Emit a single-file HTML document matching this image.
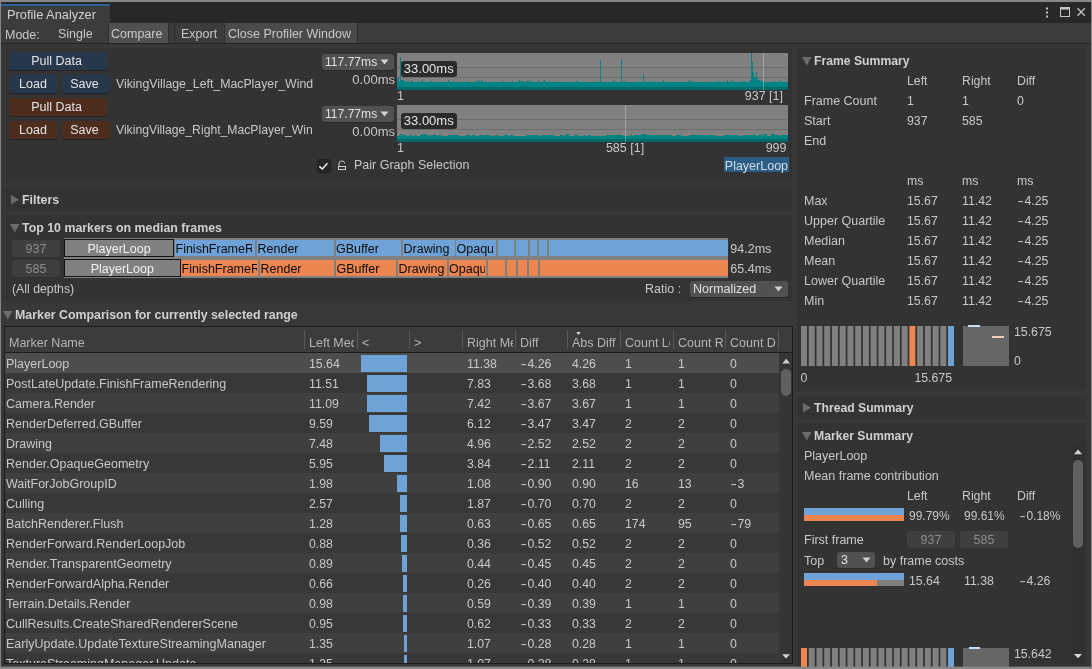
<!DOCTYPE html>
<html><head><meta charset="utf-8"><title>Profile Analyzer</title>
<style>
*{box-sizing:border-box;margin:0;padding:0}
html,body{width:1092px;height:669px;overflow:hidden;background:#383838}
body{font-family:"Liberation Sans",sans-serif;font-size:12.5px;color:#c8c8c8;position:relative;-webkit-font-smoothing:antialiased}
#root{position:absolute;left:0;top:0;width:1092px;height:669px}
.t,.g{will-change:opacity}
span.g{display:inline-block}
.a{position:absolute;white-space:nowrap}
.t{position:absolute;white-space:nowrap;height:20px;line-height:20px}
.b{font-weight:bold;font-size:12.2px}
.panel{position:absolute;background:#333333}
.btn{position:absolute;height:18px;line-height:19px;text-align:center;padding-right:3px;border-radius:3px;color:#e4e4e4;box-shadow:0 1px 0 #242424}
.blue{background:#27384c}
.brown{background:#4f2d1e}
.dd{position:absolute;background:#515151;border-radius:3px;box-shadow:0 1px 0 #2a2a2a;line-height:16px;color:#e0e0e0}
.row{position:absolute;left:5px;width:774px;height:20px}
.hsep{position:absolute;top:330px;width:1px;height:19px;background:#595959}
.num{font-size:12.3px}
.m{display:inline-block;width:7.4px;text-align:center;transform:scaleX(1.55)}
</style></head>
<body>
<div class="a" style="left:0;top:0;width:1092px;height:2px;background:#878787"></div>
<div class="a" style="left:0;top:2px;width:1092px;height:21px;background:#282828"></div>
<div class="a" style="left:1px;top:4px;width:109px;height:19px;background:#3c3c3c;border-top:2px solid #2d6399"></div>
<div class="t" style="left:7px;top:5px;color:#d2d2d2;font-size:12.8px">Profile Analyzer</div>
<svg class="a" style="left:1040px;top:4px" width="50" height="16" viewBox="0 0 50 16">
<rect x="6" y="3.5" width="2" height="2" fill="#c4c4c4"/><rect x="6" y="7.5" width="2" height="2" fill="#c4c4c4"/><rect x="6" y="11.5" width="2" height="2" fill="#c4c4c4"/>
<rect x="20.5" y="4.5" width="9" height="8" fill="none" stroke="#c4c4c4" stroke-width="1"/><rect x="20" y="3" width="10" height="2.5" fill="#c4c4c4"/>
<path d="M37.5 4.2 L44.8 11.8 M44.8 4.2 L37.5 11.8" stroke="#c4c4c4" stroke-width="1.3" fill="none"/>
</svg>
<div class="a" style="left:0;top:23px;width:1092px;height:20px;background:#3c3c3c"></div>
<div class="a" style="left:0;top:43px;width:1092px;height:1px;background:#232323"></div>
<div class="a" style="left:108px;top:23px;width:61px;height:20px;background:#505050;border-left:1px solid #2e2e2e;border-right:1px solid #2e2e2e"></div>
<div class="a" style="left:174px;top:23px;width:1px;height:20px;background:#2e2e2e"></div>
<div class="a" style="left:224px;top:23px;width:134px;height:20px;background:#4a4a4a;border-left:1px solid #2e2e2e;border-right:1px solid #2e2e2e"></div>
<div class="t" style="left:5px;top:25px">Mode:</div>
<div class="t" style="left:58px;top:24px">Single</div>
<div class="t" style="left:111px;top:24px">Compare</div>
<div class="t" style="left:181px;top:24px">Export</div>
<div class="t" style="left:228px;top:24px">Close Profiler Window</div>
<div class="panel" style="left:5px;top:48px;width:786.7px;height:135px"></div>
<div class="btn blue" style="left:9px;top:52px;width:98px"><span class="g">Pull Data</span></div>
<div class="btn blue" style="left:9px;top:75px;width:48px;padding-right:0"><span class="g">Load</span></div>
<div class="btn blue" style="left:62px;top:75px;width:48px"><span class="g">Save</span></div>
<div class="t" style="left:116px;top:74px;font-size:12.3px">VikingVillage_Left_MacPlayer_Wind</div>
<div class="btn brown" style="left:9px;top:98px;width:98px"><span class="g">Pull Data</span></div>
<div class="btn brown" style="left:9px;top:121px;width:48px;padding-right:0"><span class="g">Load</span></div>
<div class="btn brown" style="left:62px;top:121px;width:48px"><span class="g">Save</span></div>
<div class="t" style="left:116px;top:120px;font-size:12.2px">VikingVillage_Right_MacPlayer_Win</div>
<div class="dd" style="left:322px;top:54px;width:72px;height:16px;padding-left:3px;font-size:12.1px"><span class="g">117.77ms</span><svg class="a" style="left:58px;top:5px" width="9" height="6"><path d="M0.5 0.5 L8.5 0.5 L4.5 5.5 Z" fill="#d0d0d0"/></svg></div>
<div class="t" style="left:325px;top:70px;width:70px;text-align:right;font-size:13px">0.00ms</div>
<svg class="a" style="left:397px;top:53px" width="391" height="37" viewBox="0 0 391 37" shape-rendering="crispEdges"><rect width="391" height="37" fill="#808080"/><rect x="0" y="14" width="390" height="1" fill="#6b6b6b"/><rect x="0" y="24" width="390" height="1" fill="#6b6b6b"/><path d="M0 37 L0 24.5 L1 24.5 L1 24.5 L2 24.5 L2 29.0 L3 29.0 L3 28.0 L4 28.0 L4 27.0 L5 27.0 L5 27.0 L6 27.0 L6 27.0 L7 27.0 L7 29.0 L8 29.0 L8 28.0 L9 28.0 L9 29.0 L10 29.0 L10 28.0 L11 28.0 L11 28.0 L12 28.0 L12 29.0 L13 29.0 L13 29.0 L14 29.0 L14 27.0 L15 27.0 L15 28.5 L16 28.5 L16 29.0 L17 29.0 L17 29.0 L18 29.0 L18 29.0 L19 29.0 L19 29.0 L20 29.0 L20 29.0 L21 29.0 L21 28.0 L22 28.0 L22 29.0 L23 29.0 L23 28.5 L24 28.5 L24 28.5 L25 28.5 L25 27.0 L26 27.0 L26 29.0 L27 29.0 L27 29.0 L28 29.0 L28 28.5 L29 28.5 L29 29.0 L30 29.0 L30 29.0 L31 29.0 L31 29.0 L32 29.0 L32 29.0 L33 29.0 L33 28.0 L34 28.0 L34 28.0 L35 28.0 L35 28.5 L36 28.5 L36 29.0 L37 29.0 L37 29.0 L38 29.0 L38 29.0 L39 29.0 L39 29.0 L40 29.0 L40 29.0 L41 29.0 L41 28.5 L42 28.5 L42 29.0 L43 29.0 L43 29.0 L44 29.0 L44 28.5 L45 28.5 L45 29.0 L46 29.0 L46 29.0 L47 29.0 L47 29.0 L48 29.0 L48 29.0 L49 29.0 L49 28.5 L50 28.5 L50 29.0 L51 29.0 L51 27.0 L52 27.0 L52 29.0 L53 29.0 L53 29.0 L54 29.0 L54 28.5 L55 28.5 L55 29.0 L56 29.0 L56 28.0 L57 28.0 L57 29.0 L58 29.0 L58 29.0 L59 29.0 L59 29.0 L60 29.0 L60 29.0 L61 29.0 L61 29.0 L62 29.0 L62 29.0 L63 29.0 L63 29.0 L64 29.0 L64 29.0 L65 29.0 L65 29.0 L66 29.0 L66 29.0 L67 29.0 L67 29.0 L68 29.0 L68 29.0 L69 29.0 L69 29.0 L70 29.0 L70 28.0 L71 28.0 L71 29.0 L72 29.0 L72 29.0 L73 29.0 L73 29.0 L74 29.0 L74 29.0 L75 29.0 L75 28.5 L76 28.5 L76 29.0 L77 29.0 L77 29.0 L78 29.0 L78 28.0 L79 28.0 L79 29.0 L80 29.0 L80 28.5 L81 28.5 L81 27.0 L82 27.0 L82 28.0 L83 28.0 L83 29.0 L84 29.0 L84 27.0 L85 27.0 L85 28.5 L86 28.5 L86 29.0 L87 29.0 L87 29.0 L88 29.0 L88 28.0 L89 28.0 L89 29.0 L90 29.0 L90 29.0 L91 29.0 L91 29.0 L92 29.0 L92 29.0 L93 29.0 L93 29.0 L94 29.0 L94 28.5 L95 28.5 L95 29.0 L96 29.0 L96 29.0 L97 29.0 L97 29.0 L98 29.0 L98 29.0 L99 29.0 L99 28.5 L100 28.5 L100 28.5 L101 28.5 L101 28.5 L102 28.5 L102 28.5 L103 28.5 L103 29.0 L104 29.0 L104 29.0 L105 29.0 L105 28.5 L106 28.5 L106 28.0 L107 28.0 L107 29.0 L108 29.0 L108 29.0 L109 29.0 L109 29.0 L110 29.0 L110 29.0 L111 29.0 L111 29.0 L112 29.0 L112 29.0 L113 29.0 L113 29.0 L114 29.0 L114 29.0 L115 29.0 L115 28.0 L116 28.0 L116 29.0 L117 29.0 L117 29.0 L118 29.0 L118 29.0 L119 29.0 L119 29.0 L120 29.0 L120 29.0 L121 29.0 L121 29.0 L122 29.0 L122 27.0 L123 27.0 L123 29.0 L124 29.0 L124 28.0 L125 28.0 L125 28.0 L126 28.0 L126 28.5 L127 28.5 L127 28.5 L128 28.5 L128 29.0 L129 29.0 L129 28.0 L130 28.0 L130 28.0 L131 28.0 L131 28.5 L132 28.5 L132 27.0 L133 27.0 L133 29.0 L134 29.0 L134 28.0 L135 28.0 L135 29.0 L136 29.0 L136 29.0 L137 29.0 L137 28.5 L138 28.5 L138 28.5 L139 28.5 L139 29.0 L140 29.0 L140 29.0 L141 29.0 L141 27.0 L142 27.0 L142 29.0 L143 29.0 L143 29.0 L144 29.0 L144 29.0 L145 29.0 L145 29.0 L146 29.0 L146 28.0 L147 28.0 L147 27.0 L148 27.0 L148 29.0 L149 29.0 L149 28.5 L150 28.5 L150 29.0 L151 29.0 L151 28.5 L152 28.5 L152 28.0 L153 28.0 L153 29.0 L154 29.0 L154 29.0 L155 29.0 L155 28.5 L156 28.5 L156 29.0 L157 29.0 L157 28.0 L158 28.0 L158 29.0 L159 29.0 L159 29.0 L160 29.0 L160 29.0 L161 29.0 L161 29.0 L162 29.0 L162 28.5 L163 28.5 L163 29.0 L164 29.0 L164 28.5 L165 28.5 L165 29.0 L166 29.0 L166 29.0 L167 29.0 L167 29.0 L168 29.0 L168 29.0 L169 29.0 L169 28.5 L170 28.5 L170 29.0 L171 29.0 L171 29.0 L172 29.0 L172 29.0 L173 29.0 L173 29.0 L174 29.0 L174 29.0 L175 29.0 L175 29.0 L176 29.0 L176 28.5 L177 28.5 L177 29.0 L178 29.0 L178 29.0 L179 29.0 L179 28.0 L180 28.0 L180 28.0 L181 28.0 L181 28.5 L182 28.5 L182 28.5 L183 28.5 L183 29.0 L184 29.0 L184 29.0 L185 29.0 L185 29.0 L186 29.0 L186 29.0 L187 29.0 L187 29.0 L188 29.0 L188 29.0 L189 29.0 L189 29.0 L190 29.0 L190 28.5 L191 28.5 L191 28.5 L192 28.5 L192 28.5 L193 28.5 L193 28.5 L194 28.5 L194 29.0 L195 29.0 L195 29.0 L196 29.0 L196 29.0 L197 29.0 L197 29.0 L198 29.0 L198 29.0 L199 29.0 L199 29.0 L200 29.0 L200 28.0 L201 28.0 L201 29.0 L202 29.0 L202 29.0 L203 29.0 L203 29.0 L204 29.0 L204 29.0 L205 29.0 L205 29.0 L206 29.0 L206 28.5 L207 28.5 L207 29.0 L208 29.0 L208 29.0 L209 29.0 L209 29.0 L210 29.0 L210 29.0 L211 29.0 L211 29.0 L212 29.0 L212 29.0 L213 29.0 L213 29.0 L214 29.0 L214 29.0 L215 29.0 L215 28.5 L216 28.5 L216 27.0 L217 27.0 L217 28.5 L218 28.5 L218 29.0 L219 29.0 L219 29.0 L220 29.0 L220 28.5 L221 28.5 L221 29.0 L222 29.0 L222 29.0 L223 29.0 L223 29.0 L224 29.0 L224 29.0 L225 29.0 L225 29.0 L226 29.0 L226 28.5 L227 28.5 L227 28.0 L228 28.0 L228 29.0 L229 29.0 L229 29.0 L230 29.0 L230 29.0 L231 29.0 L231 29.0 L232 29.0 L232 29.0 L233 29.0 L233 29.0 L234 29.0 L234 29.0 L235 29.0 L235 28.5 L236 28.5 L236 28.5 L237 28.5 L237 28.5 L238 28.5 L238 28.5 L239 28.5 L239 29.0 L240 29.0 L240 28.5 L241 28.5 L241 29.0 L242 29.0 L242 28.5 L243 28.5 L243 29.0 L244 29.0 L244 29.0 L245 29.0 L245 29.0 L246 29.0 L246 29.0 L247 29.0 L247 29.0 L248 29.0 L248 29.0 L249 29.0 L249 29.0 L250 29.0 L250 29.0 L251 29.0 L251 29.0 L252 29.0 L252 29.0 L253 29.0 L253 28.0 L254 28.0 L254 29.0 L255 29.0 L255 28.5 L256 28.5 L256 28.0 L257 28.0 L257 29.0 L258 29.0 L258 28.5 L259 28.5 L259 29.0 L260 29.0 L260 29.0 L261 29.0 L261 29.0 L262 29.0 L262 29.0 L263 29.0 L263 29.0 L264 29.0 L264 29.0 L265 29.0 L265 29.0 L266 29.0 L266 27.0 L267 27.0 L267 29.0 L268 29.0 L268 28.5 L269 28.5 L269 28.5 L270 28.5 L270 29.0 L271 29.0 L271 29.0 L272 29.0 L272 29.0 L273 29.0 L273 29.0 L274 29.0 L274 29.0 L275 29.0 L275 29.0 L276 29.0 L276 29.0 L277 29.0 L277 29.0 L278 29.0 L278 29.0 L279 29.0 L279 29.0 L280 29.0 L280 29.0 L281 29.0 L281 29.0 L282 29.0 L282 29.0 L283 29.0 L283 29.0 L284 29.0 L284 29.0 L285 29.0 L285 29.0 L286 29.0 L286 29.0 L287 29.0 L287 28.5 L288 28.5 L288 29.0 L289 29.0 L289 29.0 L290 29.0 L290 29.0 L291 29.0 L291 28.5 L292 28.5 L292 27.0 L293 27.0 L293 29.0 L294 29.0 L294 28.0 L295 28.0 L295 28.5 L296 28.5 L296 28.0 L297 28.0 L297 29.0 L298 29.0 L298 29.0 L299 29.0 L299 29.0 L300 29.0 L300 28.5 L301 28.5 L301 29.0 L302 29.0 L302 29.0 L303 29.0 L303 28.5 L304 28.5 L304 29.0 L305 29.0 L305 29.0 L306 29.0 L306 28.5 L307 28.5 L307 29.0 L308 29.0 L308 29.0 L309 29.0 L309 29.0 L310 29.0 L310 29.0 L311 29.0 L311 29.0 L312 29.0 L312 28.5 L313 28.5 L313 29.0 L314 29.0 L314 29.0 L315 29.0 L315 29.0 L316 29.0 L316 28.5 L317 28.5 L317 29.0 L318 29.0 L318 29.0 L319 29.0 L319 28.0 L320 28.0 L320 29.0 L321 29.0 L321 29.0 L322 29.0 L322 28.0 L323 28.0 L323 29.0 L324 29.0 L324 29.0 L325 29.0 L325 29.0 L326 29.0 L326 28.0 L327 28.0 L327 29.0 L328 29.0 L328 29.0 L329 29.0 L329 29.0 L330 29.0 L330 27.0 L331 27.0 L331 28.5 L332 28.5 L332 28.0 L333 28.0 L333 29.0 L334 29.0 L334 28.5 L335 28.5 L335 27.0 L336 27.0 L336 29.0 L337 29.0 L337 29.0 L338 29.0 L338 29.0 L339 29.0 L339 28.5 L340 28.5 L340 28.5 L341 28.5 L341 29.0 L342 29.0 L342 29.0 L343 29.0 L343 29.0 L344 29.0 L344 28.0 L345 28.0 L345 28.0 L346 28.0 L346 29.0 L347 29.0 L347 29.0 L348 29.0 L348 28.0 L349 28.0 L349 29.0 L350 29.0 L350 29.0 L351 29.0 L351 29.0 L352 29.0 L352 28.0 L353 28.0 L353 29.0 L354 29.0 L354 28.0 L355 28.0 L355 29.0 L356 29.0 L356 29.0 L357 29.0 L357 29.0 L358 29.0 L358 29.0 L359 29.0 L359 29.0 L360 29.0 L360 28.5 L361 28.5 L361 27.0 L362 27.0 L362 29.0 L363 29.0 L363 28.5 L364 28.5 L364 27.0 L365 27.0 L365 28.5 L366 28.5 L366 28.0 L367 28.0 L367 28.5 L368 28.5 L368 29.0 L369 29.0 L369 29.0 L370 29.0 L370 29.0 L371 29.0 L371 28.5 L372 28.5 L372 29.0 L373 29.0 L373 28.5 L374 28.5 L374 29.0 L375 29.0 L375 28.0 L376 28.0 L376 28.5 L377 28.5 L377 28.0 L378 28.0 L378 29.0 L379 29.0 L379 29.0 L380 29.0 L380 28.5 L381 28.5 L381 29.0 L382 29.0 L382 29.0 L383 29.0 L383 27.0 L384 27.0 L384 29.0 L385 29.0 L385 29.0 L386 29.0 L386 29.0 L387 29.0 L387 29.0 L388 29.0 L388 29.0 L389 29.0 L389 29.0 L390 29.0 L390 29.0 L391 29.0 L391 37 Z" fill="#008383"/><rect x="3.0" y="4" width="1" height="26" fill="#008383"/><rect x="203.0" y="7" width="1" height="23" fill="#008383"/><rect x="224.0" y="6" width="1" height="24" fill="#008383"/><rect x="246.0" y="21" width="1" height="9" fill="#008383"/><path d="M353 30 L353 27 L353.9 27 L353.9 0 L355.2 0 L355.2 9 L356.3 9 L356.3 19 L357.4 19 L357.4 25 L358.6 25 L358.6 19 L359.8 19 L359.8 24 L361 24 L361 26.5 L362.5 26.5 L362.5 28 L364 28 L364 30 Z" fill="#008383"/><rect x="0" y="34" width="391" height="3" fill="#006a6b"/><rect x="366" y="0" width="1" height="37" fill="#e0e0e0" opacity="0.38"/></svg>
<div class="a g" style="left:400.5px;top:61px;width:56.5px;height:15.5px;line-height:16px;background:#2b2b2b;border-radius:3px;text-align:center;color:#e6e6e6;font-size:13px"><span class="g">33.00ms</span></div>
<div class="t" style="left:397px;top:86px">1</div>
<div class="t" style="left:700px;top:86px;width:83px;text-align:right">937 [1]</div>
<div class="dd" style="left:322px;top:106px;width:72px;height:16px;padding-left:3px;font-size:12.1px"><span class="g">117.77ms</span><svg class="a" style="left:58px;top:5px" width="9" height="6"><path d="M0.5 0.5 L8.5 0.5 L4.5 5.5 Z" fill="#d0d0d0"/></svg></div>
<div class="t" style="left:325px;top:122px;width:70px;text-align:right;font-size:13px">0.00ms</div>
<svg class="a" style="left:397px;top:105px" width="391" height="37" viewBox="0 0 391 37" shape-rendering="crispEdges"><rect width="391" height="37" fill="#808080"/><rect x="0" y="14" width="390" height="1" fill="#6b6b6b"/><rect x="0" y="24" width="390" height="1" fill="#6b6b6b"/><path d="M0 37 L0 31.0 L1 31.0 L1 31.0 L2 31.0 L2 30.0 L3 30.0 L3 29.0 L4 29.0 L4 29.0 L5 29.0 L5 29.0 L6 29.0 L6 30.0 L7 30.0 L7 30.0 L8 30.0 L8 30.0 L9 30.0 L9 30.0 L10 30.0 L10 31.0 L11 31.0 L11 31.0 L12 31.0 L12 31.0 L13 31.0 L13 30.0 L14 30.0 L14 30.0 L15 30.0 L15 30.0 L16 30.0 L16 30.0 L17 30.0 L17 30.0 L18 30.0 L18 30.0 L19 30.0 L19 30.0 L20 30.0 L20 30.0 L21 30.0 L21 31.0 L22 31.0 L22 31.0 L23 31.0 L23 30.0 L24 30.0 L24 30.0 L25 30.0 L25 29.0 L26 29.0 L26 29.0 L27 29.0 L27 29.0 L28 29.0 L28 29.0 L29 29.0 L29 30.0 L30 30.0 L30 30.0 L31 30.0 L31 30.0 L32 30.0 L32 30.0 L33 30.0 L33 30.0 L34 30.0 L34 30.0 L35 30.0 L35 30.0 L36 30.0 L36 30.0 L37 30.0 L37 30.0 L38 30.0 L38 30.0 L39 30.0 L39 30.0 L40 30.0 L40 30.0 L41 30.0 L41 30.0 L42 30.0 L42 30.0 L43 30.0 L43 30.0 L44 30.0 L44 31.0 L45 31.0 L45 31.0 L46 31.0 L46 31.0 L47 31.0 L47 31.0 L48 31.0 L48 31.0 L49 31.0 L49 31.0 L50 31.0 L50 31.0 L51 31.0 L51 30.0 L52 30.0 L52 30.0 L53 30.0 L53 30.0 L54 30.0 L54 30.0 L55 30.0 L55 30.0 L56 30.0 L56 30.0 L57 30.0 L57 30.0 L58 30.0 L58 30.0 L59 30.0 L59 30.0 L60 30.0 L60 30.0 L61 30.0 L61 30.0 L62 30.0 L62 31.0 L63 31.0 L63 31.0 L64 31.0 L64 31.0 L65 31.0 L65 31.0 L66 31.0 L66 31.0 L67 31.0 L67 30.0 L68 30.0 L68 30.0 L69 30.0 L69 30.0 L70 30.0 L70 30.0 L71 30.0 L71 30.0 L72 30.0 L72 30.0 L73 30.0 L73 31.0 L74 31.0 L74 31.0 L75 31.0 L75 30.0 L76 30.0 L76 30.0 L77 30.0 L77 30.0 L78 30.0 L78 31.0 L79 31.0 L79 31.0 L80 31.0 L80 31.0 L81 31.0 L81 31.0 L82 31.0 L82 30.0 L83 30.0 L83 30.0 L84 30.0 L84 30.0 L85 30.0 L85 30.0 L86 30.0 L86 30.0 L87 30.0 L87 31.0 L88 31.0 L88 30.0 L89 30.0 L89 30.0 L90 30.0 L90 30.0 L91 30.0 L91 30.0 L92 30.0 L92 30.0 L93 30.0 L93 31.0 L94 31.0 L94 31.0 L95 31.0 L95 31.0 L96 31.0 L96 31.0 L97 31.0 L97 31.0 L98 31.0 L98 30.0 L99 30.0 L99 30.0 L100 30.0 L100 30.0 L101 30.0 L101 31.0 L102 31.0 L102 31.0 L103 31.0 L103 31.0 L104 31.0 L104 31.0 L105 31.0 L105 31.0 L106 31.0 L106 31.0 L107 31.0 L107 30.0 L108 30.0 L108 30.0 L109 30.0 L109 30.0 L110 30.0 L110 30.0 L111 30.0 L111 31.0 L112 31.0 L112 31.0 L113 31.0 L113 30.0 L114 30.0 L114 30.0 L115 30.0 L115 30.0 L116 30.0 L116 31.0 L117 31.0 L117 31.0 L118 31.0 L118 31.0 L119 31.0 L119 31.0 L120 31.0 L120 30.0 L121 30.0 L121 31.0 L122 31.0 L122 31.0 L123 31.0 L123 31.0 L124 31.0 L124 31.0 L125 31.0 L125 31.0 L126 31.0 L126 31.0 L127 31.0 L127 31.0 L128 31.0 L128 30.0 L129 30.0 L129 30.0 L130 30.0 L130 30.0 L131 30.0 L131 30.0 L132 30.0 L132 30.0 L133 30.0 L133 30.0 L134 30.0 L134 30.0 L135 30.0 L135 30.0 L136 30.0 L136 30.0 L137 30.0 L137 30.0 L138 30.0 L138 30.0 L139 30.0 L139 30.0 L140 30.0 L140 30.0 L141 30.0 L141 30.0 L142 30.0 L142 31.0 L143 31.0 L143 31.0 L144 31.0 L144 31.0 L145 31.0 L145 30.0 L146 30.0 L146 30.0 L147 30.0 L147 30.0 L148 30.0 L148 30.0 L149 30.0 L149 30.0 L150 30.0 L150 30.0 L151 30.0 L151 30.0 L152 30.0 L152 30.0 L153 30.0 L153 30.0 L154 30.0 L154 30.0 L155 30.0 L155 30.0 L156 30.0 L156 30.0 L157 30.0 L157 31.0 L158 31.0 L158 31.0 L159 31.0 L159 31.0 L160 31.0 L160 31.0 L161 31.0 L161 31.0 L162 31.0 L162 30.0 L163 30.0 L163 30.0 L164 30.0 L164 30.0 L165 30.0 L165 30.0 L166 30.0 L166 31.0 L167 31.0 L167 31.0 L168 31.0 L168 30.0 L169 30.0 L169 29.0 L170 29.0 L170 29.0 L171 29.0 L171 29.0 L172 29.0 L172 31.0 L173 31.0 L173 31.0 L174 31.0 L174 31.0 L175 31.0 L175 31.0 L176 31.0 L176 31.0 L177 31.0 L177 30.0 L178 30.0 L178 30.0 L179 30.0 L179 30.0 L180 30.0 L180 30.0 L181 30.0 L181 31.0 L182 31.0 L182 31.0 L183 31.0 L183 31.0 L184 31.0 L184 31.0 L185 31.0 L185 30.0 L186 30.0 L186 30.0 L187 30.0 L187 30.0 L188 30.0 L188 31.0 L189 31.0 L189 31.0 L190 31.0 L190 31.0 L191 31.0 L191 30.0 L192 30.0 L192 30.0 L193 30.0 L193 30.0 L194 30.0 L194 31.0 L195 31.0 L195 31.0 L196 31.0 L196 31.0 L197 31.0 L197 31.0 L198 31.0 L198 31.0 L199 31.0 L199 31.0 L200 31.0 L200 30.0 L201 30.0 L201 31.0 L202 31.0 L202 31.0 L203 31.0 L203 31.0 L204 31.0 L204 31.0 L205 31.0 L205 31.0 L206 31.0 L206 31.0 L207 31.0 L207 31.0 L208 31.0 L208 31.0 L209 31.0 L209 30.0 L210 30.0 L210 30.0 L211 30.0 L211 30.0 L212 30.0 L212 30.0 L213 30.0 L213 30.0 L214 30.0 L214 30.0 L215 30.0 L215 30.0 L216 30.0 L216 30.0 L217 30.0 L217 30.0 L218 30.0 L218 30.0 L219 30.0 L219 30.0 L220 30.0 L220 30.0 L221 30.0 L221 30.0 L222 30.0 L222 30.0 L223 30.0 L223 30.0 L224 30.0 L224 30.0 L225 30.0 L225 30.0 L226 30.0 L226 31.0 L227 31.0 L227 31.0 L228 31.0 L228 31.0 L229 31.0 L229 31.0 L230 31.0 L230 31.0 L231 31.0 L231 31.0 L232 31.0 L232 31.0 L233 31.0 L233 30.0 L234 30.0 L234 30.0 L235 30.0 L235 30.0 L236 30.0 L236 30.0 L237 30.0 L237 30.0 L238 30.0 L238 30.0 L239 30.0 L239 30.0 L240 30.0 L240 30.0 L241 30.0 L241 30.0 L242 30.0 L242 30.0 L243 30.0 L243 30.0 L244 30.0 L244 30.0 L245 30.0 L245 29.0 L246 29.0 L246 29.0 L247 29.0 L247 29.0 L248 29.0 L248 29.0 L249 29.0 L249 30.0 L250 30.0 L250 30.0 L251 30.0 L251 30.0 L252 30.0 L252 30.0 L253 30.0 L253 30.0 L254 30.0 L254 30.0 L255 30.0 L255 30.0 L256 30.0 L256 30.0 L257 30.0 L257 30.0 L258 30.0 L258 30.0 L259 30.0 L259 30.0 L260 30.0 L260 30.0 L261 30.0 L261 30.0 L262 30.0 L262 30.0 L263 30.0 L263 30.0 L264 30.0 L264 31.0 L265 31.0 L265 30.0 L266 30.0 L266 30.0 L267 30.0 L267 30.0 L268 30.0 L268 30.0 L269 30.0 L269 31.0 L270 31.0 L270 30.0 L271 30.0 L271 30.0 L272 30.0 L272 30.0 L273 30.0 L273 30.0 L274 30.0 L274 30.0 L275 30.0 L275 31.0 L276 31.0 L276 31.0 L277 31.0 L277 31.0 L278 31.0 L278 31.0 L279 31.0 L279 30.0 L280 30.0 L280 30.0 L281 30.0 L281 30.0 L282 30.0 L282 30.0 L283 30.0 L283 30.0 L284 30.0 L284 31.0 L285 31.0 L285 31.0 L286 31.0 L286 31.0 L287 31.0 L287 31.0 L288 31.0 L288 31.0 L289 31.0 L289 31.0 L290 31.0 L290 31.0 L291 31.0 L291 31.0 L292 31.0 L292 30.0 L293 30.0 L293 30.0 L294 30.0 L294 30.0 L295 30.0 L295 30.0 L296 30.0 L296 30.0 L297 30.0 L297 30.0 L298 30.0 L298 30.0 L299 30.0 L299 30.0 L300 30.0 L300 30.0 L301 30.0 L301 30.0 L302 30.0 L302 30.0 L303 30.0 L303 30.0 L304 30.0 L304 30.0 L305 30.0 L305 30.0 L306 30.0 L306 30.0 L307 30.0 L307 30.0 L308 30.0 L308 30.0 L309 30.0 L309 30.0 L310 30.0 L310 30.0 L311 30.0 L311 30.0 L312 30.0 L312 30.0 L313 30.0 L313 30.0 L314 30.0 L314 30.0 L315 30.0 L315 30.0 L316 30.0 L316 30.0 L317 30.0 L317 30.0 L318 30.0 L318 31.0 L319 31.0 L319 31.0 L320 31.0 L320 31.0 L321 31.0 L321 31.0 L322 31.0 L322 31.0 L323 31.0 L323 31.0 L324 31.0 L324 31.0 L325 31.0 L325 31.0 L326 31.0 L326 31.0 L327 31.0 L327 30.0 L328 30.0 L328 30.0 L329 30.0 L329 30.0 L330 30.0 L330 30.0 L331 30.0 L331 30.0 L332 30.0 L332 30.0 L333 30.0 L333 30.0 L334 30.0 L334 30.0 L335 30.0 L335 30.0 L336 30.0 L336 30.0 L337 30.0 L337 30.0 L338 30.0 L338 30.0 L339 30.0 L339 30.0 L340 30.0 L340 30.0 L341 30.0 L341 31.0 L342 31.0 L342 31.0 L343 31.0 L343 31.0 L344 31.0 L344 31.0 L345 31.0 L345 31.0 L346 31.0 L346 30.0 L347 30.0 L347 30.0 L348 30.0 L348 30.0 L349 30.0 L349 30.0 L350 30.0 L350 30.0 L351 30.0 L351 30.0 L352 30.0 L352 30.0 L353 30.0 L353 30.0 L354 30.0 L354 30.0 L355 30.0 L355 30.0 L356 30.0 L356 30.0 L357 30.0 L357 30.0 L358 30.0 L358 30.0 L359 30.0 L359 31.0 L360 31.0 L360 31.0 L361 31.0 L361 30.0 L362 30.0 L362 30.0 L363 30.0 L363 30.0 L364 30.0 L364 30.0 L365 30.0 L365 30.0 L366 30.0 L366 29.0 L367 29.0 L367 29.0 L368 29.0 L368 29.0 L369 29.0 L369 29.0 L370 29.0 L370 31.0 L371 31.0 L371 31.0 L372 31.0 L372 31.0 L373 31.0 L373 31.0 L374 31.0 L374 29.0 L375 29.0 L375 29.0 L376 29.0 L376 29.0 L377 29.0 L377 30.0 L378 30.0 L378 30.0 L379 30.0 L379 30.0 L380 30.0 L380 30.0 L381 30.0 L381 30.0 L382 30.0 L382 30.0 L383 30.0 L383 30.0 L384 30.0 L384 30.0 L385 30.0 L385 30.0 L386 30.0 L386 30.0 L387 30.0 L387 30.0 L388 30.0 L388 30.0 L389 30.0 L389 30.0 L390 30.0 L390 30.0 L391 30.0 L391 37 Z" fill="#008383"/><rect x="0" y="34" width="391" height="3" fill="#006a6b"/><rect x="15" y="30" width="1" height="1" fill="#d08a55" opacity="0.85"/><rect x="126" y="30" width="1" height="1" fill="#d08a55" opacity="0.85"/><rect x="20" y="30" width="1" height="1" fill="#d08a55" opacity="0.85"/><rect x="237" y="29" width="1" height="1" fill="#d08a55" opacity="0.85"/><rect x="131" y="29" width="1" height="1" fill="#a89a7a" opacity="0.85"/><rect x="32" y="30" width="1" height="1" fill="#d08a55" opacity="0.85"/><rect x="185" y="30" width="1" height="1" fill="#d08a55" opacity="0.85"/><rect x="315" y="29" width="1" height="1" fill="#d08a55" opacity="0.85"/><rect x="382" y="30" width="1" height="1" fill="#a89a7a" opacity="0.85"/><rect x="162" y="30" width="1" height="1" fill="#d08a55" opacity="0.85"/><rect x="1" y="30" width="1" height="1" fill="#a89a7a" opacity="0.85"/><rect x="324" y="29" width="1" height="1" fill="#d08a55" opacity="0.85"/><rect x="119" y="29" width="1" height="1" fill="#d08a55" opacity="0.85"/><rect x="366" y="30" width="1" height="1" fill="#d08a55" opacity="0.85"/><rect x="128" y="30" width="1" height="1" fill="#d08a55" opacity="0.85"/><rect x="67" y="30" width="1" height="1" fill="#d08a55" opacity="0.85"/><rect x="4" y="30" width="1" height="1" fill="#d08a55" opacity="0.85"/><rect x="354" y="29" width="1" height="1" fill="#a89a7a" opacity="0.85"/><rect x="120" y="30" width="1" height="1" fill="#d08a55" opacity="0.85"/><rect x="235" y="30" width="1" height="1" fill="#a89a7a" opacity="0.85"/><rect x="40" y="30" width="1" height="1" fill="#d08a55" opacity="0.85"/><rect x="200" y="29" width="1" height="1" fill="#d08a55" opacity="0.85"/><rect x="208" y="29" width="1" height="1" fill="#a89a7a" opacity="0.85"/><rect x="17" y="30" width="1" height="1" fill="#a89a7a" opacity="0.85"/><rect x="278" y="30" width="1" height="1" fill="#d08a55" opacity="0.85"/><rect x="218" y="29" width="1" height="1" fill="#d08a55" opacity="0.85"/><rect x="228" y="0" width="1" height="37" fill="#e0e0e0" opacity="0.38"/></svg>
<div class="a g" style="left:400.5px;top:113px;width:56.5px;height:15.5px;line-height:16px;background:#2b2b2b;border-radius:3px;text-align:center;color:#e6e6e6;font-size:13px"><span class="g">33.00ms</span></div>
<div class="t" style="left:397px;top:138px">1</div>
<div class="t" style="left:585px;top:138px;width:80px;text-align:center">585 [1]</div>
<div class="t" style="left:700px;top:138px;width:86.5px;text-align:right">999</div>
<div class="a" style="left:317px;top:159px;width:13.5px;height:13.5px;background:#262626;border:1px solid #1e1e1e;border-radius:2.5px"></div>
<svg class="a" style="left:317px;top:159px" width="13" height="13"><path d="M2.4 7.4 L5.3 10 L10.4 4.2" stroke="#f0f0f0" stroke-width="1.5" fill="none"/></svg>
<svg class="a" style="left:336px;top:158px" width="12" height="14"><path d="M3 8 V5.9 A2.85 2.7 0 0 1 8.7 5.4" stroke="#d0d0d0" stroke-width="1" fill="none"/><rect x="2.5" y="8.5" width="7" height="3" fill="none" stroke="#d0d0d0" stroke-width="1"/></svg>
<div class="t" style="left:354px;top:155px">Pair Graph Selection</div>
<div class="a" style="left:724px;top:157px;width:65px;height:15px;background:#2c5d87"></div>
<div class="t" style="left:724.8px;top:155.5px;color:#d4dce4;font-size:12.5px">PlayerLoop</div>
<div class="panel" style="left:5px;top:187px;width:786.7px;height:24px"></div>
<svg class="a" style="left:11px;top:194.8px" width="9" height="10"><path d="M0 0 L8 4.7 L0 9.4 Z" fill="#6c6c6c"/></svg>
<div class="t b" style="left:22px;top:190px;color:#d0d0d0;font-size:12.38px">Filters</div>
<div class="panel" style="left:5px;top:215px;width:786.7px;height:86px"></div>
<svg class="a" style="left:10px;top:223.7px" width="10" height="9"><path d="M0 0 L9.6 0 L4.8 8.5 Z" fill="#6c6c6c"/></svg>
<div class="t b" style="left:22px;top:218px;color:#d0d0d0;font-size:12.38px">Top 10 markers on median frames</div>
<div class="a" style="left:63.5px;top:238px;width:664.5px;height:40px;background:#808080"></div>
<div class="a g" style="left:12px;top:240px;width:48px;height:16.5px;line-height:18px;background:#3f3f3f;border-radius:3px;text-align:center;color:#8c8c8c"><span class="g">937</span></div>
<div class="a g" style="left:64px;top:239px;width:110px;height:18px;background:#808080;border:1px solid #141414;text-align:center;line-height:18px;color:#f0f0f0"><span class="g">PlayerLoop</span></div>
<div class="a g" style="left:175px;top:240px;width:80px;height:16px;line-height:18px;background:#6fa3d8;color:#0c0c0c;overflow:hidden;padding-left:0.5px"><span class="g" style="display:block;overflow:hidden;width:76.5px">FinishFrameRendering</span></div>
<div class="a g" style="left:257px;top:240px;width:76.5px;height:16px;line-height:18px;background:#6fa3d8;color:#0c0c0c;overflow:hidden;padding-left:0.5px"><span class="g" style="display:block;overflow:hidden;width:73.0px">Render</span></div>
<div class="a g" style="left:335.5px;top:240px;width:65.5px;height:16px;line-height:18px;background:#6fa3d8;color:#0c0c0c;overflow:hidden;padding-left:0.5px"><span class="g" style="display:block;overflow:hidden;width:62.0px">GBuffer</span></div>
<div class="a g" style="left:403px;top:240px;width:51.5px;height:16px;line-height:18px;background:#6fa3d8;color:#0c0c0c;overflow:hidden;padding-left:0.5px"><span class="g" style="display:block;overflow:hidden;width:48.0px">Drawing</span></div>
<div class="a g" style="left:456px;top:240px;width:40px;height:16px;line-height:18px;background:#6fa3d8;color:#0c0c0c;overflow:hidden;padding-left:0.5px"><span class="g" style="display:block;overflow:hidden;width:36.5px">OpaqueGeometry</span></div>
<div class="a g" style="left:498px;top:240px;width:16.200000000000045px;height:16px;line-height:18px;background:#6fa3d8;color:#0c0c0c;overflow:hidden;padding-left:0.5px"><span class="g" style="display:block;overflow:hidden;width:12.700000000000045px"></span></div>
<div class="a g" style="left:516px;top:240px;width:12px;height:16px;line-height:18px;background:#6fa3d8;color:#0c0c0c;overflow:hidden;padding-left:0.5px"><span class="g" style="display:block;overflow:hidden;width:8.5px"></span></div>
<div class="a g" style="left:530px;top:240px;width:7px;height:16px;line-height:18px;background:#6fa3d8;color:#0c0c0c;overflow:hidden;padding-left:0.5px"><span class="g" style="display:block;overflow:hidden;width:3.5px"></span></div>
<div class="a g" style="left:539px;top:240px;width:8px;height:16px;line-height:18px;background:#6fa3d8;color:#0c0c0c;overflow:hidden;padding-left:0.5px"><span class="g" style="display:block;overflow:hidden;width:4.5px"></span></div>
<div class="a g" style="left:549px;top:240px;width:179px;height:16px;line-height:18px;background:#6fa3d8;color:#0c0c0c;overflow:hidden;padding-left:0.5px"><span class="g" style="display:block;overflow:hidden;width:175.5px"></span></div>
<div class="t" style="left:730.3px;top:239px">94.2ms</div>
<div class="a g" style="left:12px;top:260px;width:48px;height:16.5px;line-height:18px;background:#3f3f3f;border-radius:3px;text-align:center;color:#8c8c8c"><span class="g">585</span></div>
<div class="a g" style="left:64px;top:259px;width:116.5px;height:18px;background:#808080;border:1px solid #141414;text-align:center;line-height:18px;color:#f0f0f0"><span class="g">PlayerLoop</span></div>
<div class="a g" style="left:181px;top:260px;width:76.5px;height:16px;line-height:18px;background:#ec8550;color:#0c0c0c;overflow:hidden;padding-left:0.5px"><span class="g" style="display:block;overflow:hidden;width:75.0px">FinishFrameRendering</span></div>
<div class="a g" style="left:260px;top:260px;width:74px;height:16px;line-height:18px;background:#ec8550;color:#0c0c0c;overflow:hidden;padding-left:0.5px"><span class="g" style="display:block;overflow:hidden;width:72.5px">Render</span></div>
<div class="a g" style="left:336px;top:260px;width:60px;height:16px;line-height:18px;background:#ec8550;color:#0c0c0c;overflow:hidden;padding-left:0.5px"><span class="g" style="display:block;overflow:hidden;width:58.5px">GBuffer</span></div>
<div class="a g" style="left:398px;top:260px;width:49px;height:16px;line-height:18px;background:#ec8550;color:#0c0c0c;overflow:hidden;padding-left:0.5px"><span class="g" style="display:block;overflow:hidden;width:47.5px">Drawing</span></div>
<div class="a g" style="left:448.5px;top:260px;width:37.5px;height:16px;line-height:18px;background:#ec8550;color:#0c0c0c;overflow:hidden;padding-left:0.5px"><span class="g" style="display:block;overflow:hidden;width:36.0px">OpaqueGeometry</span></div>
<div class="a g" style="left:488px;top:260px;width:17px;height:16px;line-height:18px;background:#ec8550;color:#0c0c0c;overflow:hidden;padding-left:0.5px"><span class="g" style="display:block;overflow:hidden;width:15.5px"></span></div>
<div class="a g" style="left:507px;top:260px;width:9px;height:16px;line-height:18px;background:#ec8550;color:#0c0c0c;overflow:hidden;padding-left:0.5px"><span class="g" style="display:block;overflow:hidden;width:7.5px"></span></div>
<div class="a g" style="left:518px;top:260px;width:9px;height:16px;line-height:18px;background:#ec8550;color:#0c0c0c;overflow:hidden;padding-left:0.5px"><span class="g" style="display:block;overflow:hidden;width:7.5px"></span></div>
<div class="a g" style="left:529px;top:260px;width:9px;height:16px;line-height:18px;background:#ec8550;color:#0c0c0c;overflow:hidden;padding-left:0.5px"><span class="g" style="display:block;overflow:hidden;width:7.5px"></span></div>
<div class="a g" style="left:540px;top:260px;width:188px;height:16px;line-height:18px;background:#ec8550;color:#0c0c0c;overflow:hidden;padding-left:0.5px"><span class="g" style="display:block;overflow:hidden;width:186.5px"></span></div>
<div class="t" style="left:730.3px;top:259px">65.4ms</div>
<div class="t" style="left:12px;top:279px;font-size:12.3px">(All depths)</div>
<div class="t" style="left:645px;top:279px">Ratio :</div>
<div class="dd" style="left:690px;top:281px;width:98px;height:15.5px;padding-left:3px"><span class="g">Normalized</span><svg class="a" style="left:84px;top:5px" width="9" height="6"><path d="M0.5 0.5 L8.5 0.5 L4.5 5.5 Z" fill="#d0d0d0"/></svg></div>
<svg class="a" style="left:3px;top:310.7px" width="10" height="9"><path d="M0 0 L9.6 0 L4.8 8.5 Z" fill="#6c6c6c"/></svg>
<div class="t b" style="left:15px;top:305px;color:#d0d0d0;font-size:12.38px">Marker Comparison for currently selected range</div>
<div class="a" style="left:4px;top:326px;width:789px;height:338px;border:1px solid #1d1d1d;background:#383838"></div>
<div class="a" style="left:5px;top:327px;width:787px;height:25px;background:#3c3c3c"></div>
<div class="a" style="left:5px;top:352px;width:787px;height:1px;background:#1d1d1d"></div>
<div class="a" style="left:779px;top:353px;width:13px;height:310px;background:#353535"></div>
<div class="t" style="left:9px;top:333px;width:290px;overflow:hidden;color:#b4b4b4">Marker Name</div>
<div class="t" style="left:309px;top:333px;width:44.5px;overflow:hidden;color:#b4b4b4">Left Med</div>
<div class="t" style="left:362px;top:333px;width:40px;overflow:hidden;color:#b4b4b4">&lt;</div>
<div class="t" style="left:414px;top:333px;width:40px;overflow:hidden;color:#b4b4b4">&gt;</div>
<div class="t" style="left:467px;top:333px;width:46px;overflow:hidden;color:#b4b4b4">Right Me</div>
<div class="t" style="left:520px;top:333px;width:40px;overflow:hidden;color:#b4b4b4">Diff</div>
<div class="t" style="left:572px;top:333px;width:46px;overflow:hidden;color:#b4b4b4">Abs Diff</div>
<div class="t" style="left:625px;top:333px;width:45px;overflow:hidden;color:#b4b4b4">Count Le</div>
<div class="t" style="left:678px;top:333px;width:46px;overflow:hidden;color:#b4b4b4">Count R</div>
<div class="t" style="left:730px;top:333px;width:46px;overflow:hidden;color:#b4b4b4">Count De</div>
<div class="hsep" style="left:304px"></div>
<div class="hsep" style="left:357px"></div>
<div class="hsep" style="left:409px"></div>
<div class="hsep" style="left:462px"></div>
<div class="hsep" style="left:515px"></div>
<div class="hsep" style="left:567px"></div>
<div class="hsep" style="left:620px"></div>
<div class="hsep" style="left:673px"></div>
<div class="hsep" style="left:725px"></div>
<div class="hsep" style="left:778px"></div>
<svg class="a" style="left:575.7px;top:332px" width="6" height="4"><path d="M0.3 0 L4.7 0 L2.5 3.1 Z" fill="#e0e0e0"/></svg>
<div class="a" style="left:5px;top:353px;width:787px;height:310px;overflow:hidden">
<div class="row" style="left:0;top:0px;background:#4d4d4d">
<span class="t" style="left:1px;top:1px">PlayerLoop</span>
<span class="t num" style="left:304px;top:1px">15.64</span>
<span class="t num" style="left:462px;top:1px">11.38</span>
<span class="t num" style="left:515px;top:1px"><span class="m">-</span>4.26</span>
<span class="t num" style="left:567px;top:1px">4.26</span>
<span class="t num" style="left:620px;top:1px">1</span>
<span class="t num" style="left:673px;top:1px">1</span>
<span class="t num" style="left:725px;top:1px">0</span>
<span class="a" style="left:355.8px;top:2px;width:46.2px;height:17px;background:#6fa3d8"></span>
</div>
<div class="row" style="left:0;top:20px;background:#383838">
<span class="t" style="left:1px;top:1px">PostLateUpdate.FinishFrameRendering</span>
<span class="t num" style="left:304px;top:1px">11.51</span>
<span class="t num" style="left:462px;top:1px">7.83</span>
<span class="t num" style="left:515px;top:1px"><span class="m">-</span>3.68</span>
<span class="t num" style="left:567px;top:1px">3.68</span>
<span class="t num" style="left:620px;top:1px">1</span>
<span class="t num" style="left:673px;top:1px">1</span>
<span class="t num" style="left:725px;top:1px">0</span>
<span class="a" style="left:362.1px;top:2px;width:39.9px;height:17px;background:#6fa3d8"></span>
</div>
<div class="row" style="left:0;top:40px;background:#3f3f3f">
<span class="t" style="left:1px;top:1px">Camera.Render</span>
<span class="t num" style="left:304px;top:1px">11.09</span>
<span class="t num" style="left:462px;top:1px">7.42</span>
<span class="t num" style="left:515px;top:1px"><span class="m">-</span>3.67</span>
<span class="t num" style="left:567px;top:1px">3.67</span>
<span class="t num" style="left:620px;top:1px">1</span>
<span class="t num" style="left:673px;top:1px">1</span>
<span class="t num" style="left:725px;top:1px">0</span>
<span class="a" style="left:362.2px;top:2px;width:39.8px;height:17px;background:#6fa3d8"></span>
</div>
<div class="row" style="left:0;top:60px;background:#383838">
<span class="t" style="left:1px;top:1px">RenderDeferred.GBuffer</span>
<span class="t num" style="left:304px;top:1px">9.59</span>
<span class="t num" style="left:462px;top:1px">6.12</span>
<span class="t num" style="left:515px;top:1px"><span class="m">-</span>3.47</span>
<span class="t num" style="left:567px;top:1px">3.47</span>
<span class="t num" style="left:620px;top:1px">2</span>
<span class="t num" style="left:673px;top:1px">2</span>
<span class="t num" style="left:725px;top:1px">0</span>
<span class="a" style="left:364.4px;top:2px;width:37.6px;height:17px;background:#6fa3d8"></span>
</div>
<div class="row" style="left:0;top:80px;background:#3f3f3f">
<span class="t" style="left:1px;top:1px">Drawing</span>
<span class="t num" style="left:304px;top:1px">7.48</span>
<span class="t num" style="left:462px;top:1px">4.96</span>
<span class="t num" style="left:515px;top:1px"><span class="m">-</span>2.52</span>
<span class="t num" style="left:567px;top:1px">2.52</span>
<span class="t num" style="left:620px;top:1px">2</span>
<span class="t num" style="left:673px;top:1px">2</span>
<span class="t num" style="left:725px;top:1px">0</span>
<span class="a" style="left:374.7px;top:2px;width:27.3px;height:17px;background:#6fa3d8"></span>
</div>
<div class="row" style="left:0;top:100px;background:#383838">
<span class="t" style="left:1px;top:1px">Render.OpaqueGeometry</span>
<span class="t num" style="left:304px;top:1px">5.95</span>
<span class="t num" style="left:462px;top:1px">3.84</span>
<span class="t num" style="left:515px;top:1px"><span class="m">-</span>2.11</span>
<span class="t num" style="left:567px;top:1px">2.11</span>
<span class="t num" style="left:620px;top:1px">2</span>
<span class="t num" style="left:673px;top:1px">2</span>
<span class="t num" style="left:725px;top:1px">0</span>
<span class="a" style="left:379.1px;top:2px;width:22.9px;height:17px;background:#6fa3d8"></span>
</div>
<div class="row" style="left:0;top:120px;background:#3f3f3f">
<span class="t" style="left:1px;top:1px">WaitForJobGroupID</span>
<span class="t num" style="left:304px;top:1px">1.98</span>
<span class="t num" style="left:462px;top:1px">1.08</span>
<span class="t num" style="left:515px;top:1px"><span class="m">-</span>0.90</span>
<span class="t num" style="left:567px;top:1px">0.90</span>
<span class="t num" style="left:620px;top:1px">16</span>
<span class="t num" style="left:673px;top:1px">13</span>
<span class="t num" style="left:725px;top:1px"><span class="m">-</span>3</span>
<span class="a" style="left:392.2px;top:2px;width:9.8px;height:17px;background:#6fa3d8"></span>
</div>
<div class="row" style="left:0;top:140px;background:#383838">
<span class="t" style="left:1px;top:1px">Culling</span>
<span class="t num" style="left:304px;top:1px">2.57</span>
<span class="t num" style="left:462px;top:1px">1.87</span>
<span class="t num" style="left:515px;top:1px"><span class="m">-</span>0.70</span>
<span class="t num" style="left:567px;top:1px">0.70</span>
<span class="t num" style="left:620px;top:1px">2</span>
<span class="t num" style="left:673px;top:1px">2</span>
<span class="t num" style="left:725px;top:1px">0</span>
<span class="a" style="left:395.1px;top:2px;width:6.9px;height:17px;background:#6fa3d8"></span>
</div>
<div class="row" style="left:0;top:160px;background:#3f3f3f">
<span class="t" style="left:1px;top:1px">BatchRenderer.Flush</span>
<span class="t num" style="left:304px;top:1px">1.28</span>
<span class="t num" style="left:462px;top:1px">0.63</span>
<span class="t num" style="left:515px;top:1px"><span class="m">-</span>0.65</span>
<span class="t num" style="left:567px;top:1px">0.65</span>
<span class="t num" style="left:620px;top:1px">174</span>
<span class="t num" style="left:673px;top:1px">95</span>
<span class="t num" style="left:725px;top:1px"><span class="m">-</span>79</span>
<span class="a" style="left:394.9px;top:2px;width:7.1px;height:17px;background:#6fa3d8"></span>
</div>
<div class="row" style="left:0;top:180px;background:#383838">
<span class="t" style="left:1px;top:1px">RenderForward.RenderLoopJob</span>
<span class="t num" style="left:304px;top:1px">0.88</span>
<span class="t num" style="left:462px;top:1px">0.36</span>
<span class="t num" style="left:515px;top:1px"><span class="m">-</span>0.52</span>
<span class="t num" style="left:567px;top:1px">0.52</span>
<span class="t num" style="left:620px;top:1px">2</span>
<span class="t num" style="left:673px;top:1px">2</span>
<span class="t num" style="left:725px;top:1px">0</span>
<span class="a" style="left:396.4px;top:2px;width:5.6px;height:17px;background:#6fa3d8"></span>
</div>
<div class="row" style="left:0;top:200px;background:#3f3f3f">
<span class="t" style="left:1px;top:1px">Render.TransparentGeometry</span>
<span class="t num" style="left:304px;top:1px">0.89</span>
<span class="t num" style="left:462px;top:1px">0.44</span>
<span class="t num" style="left:515px;top:1px"><span class="m">-</span>0.45</span>
<span class="t num" style="left:567px;top:1px">0.45</span>
<span class="t num" style="left:620px;top:1px">2</span>
<span class="t num" style="left:673px;top:1px">2</span>
<span class="t num" style="left:725px;top:1px">0</span>
<span class="a" style="left:397.1px;top:2px;width:4.9px;height:17px;background:#6fa3d8"></span>
</div>
<div class="row" style="left:0;top:220px;background:#383838">
<span class="t" style="left:1px;top:1px">RenderForwardAlpha.Render</span>
<span class="t num" style="left:304px;top:1px">0.66</span>
<span class="t num" style="left:462px;top:1px">0.26</span>
<span class="t num" style="left:515px;top:1px"><span class="m">-</span>0.40</span>
<span class="t num" style="left:567px;top:1px">0.40</span>
<span class="t num" style="left:620px;top:1px">2</span>
<span class="t num" style="left:673px;top:1px">2</span>
<span class="t num" style="left:725px;top:1px">0</span>
<span class="a" style="left:397.7px;top:2px;width:4.3px;height:17px;background:#6fa3d8"></span>
</div>
<div class="row" style="left:0;top:240px;background:#3f3f3f">
<span class="t" style="left:1px;top:1px">Terrain.Details.Render</span>
<span class="t num" style="left:304px;top:1px">0.98</span>
<span class="t num" style="left:462px;top:1px">0.59</span>
<span class="t num" style="left:515px;top:1px"><span class="m">-</span>0.39</span>
<span class="t num" style="left:567px;top:1px">0.39</span>
<span class="t num" style="left:620px;top:1px">1</span>
<span class="t num" style="left:673px;top:1px">1</span>
<span class="t num" style="left:725px;top:1px">0</span>
<span class="a" style="left:397.8px;top:2px;width:4.2px;height:17px;background:#6fa3d8"></span>
</div>
<div class="row" style="left:0;top:260px;background:#383838">
<span class="t" style="left:1px;top:1px">CullResults.CreateSharedRendererScene</span>
<span class="t num" style="left:304px;top:1px">0.95</span>
<span class="t num" style="left:462px;top:1px">0.62</span>
<span class="t num" style="left:515px;top:1px"><span class="m">-</span>0.33</span>
<span class="t num" style="left:567px;top:1px">0.33</span>
<span class="t num" style="left:620px;top:1px">2</span>
<span class="t num" style="left:673px;top:1px">2</span>
<span class="t num" style="left:725px;top:1px">0</span>
<span class="a" style="left:398.4px;top:2px;width:3.6px;height:17px;background:#6fa3d8"></span>
</div>
<div class="row" style="left:0;top:280px;background:#3f3f3f">
<span class="t" style="left:1px;top:1px">EarlyUpdate.UpdateTextureStreamingManager</span>
<span class="t num" style="left:304px;top:1px">1.35</span>
<span class="t num" style="left:462px;top:1px">1.07</span>
<span class="t num" style="left:515px;top:1px"><span class="m">-</span>0.28</span>
<span class="t num" style="left:567px;top:1px">0.28</span>
<span class="t num" style="left:620px;top:1px">1</span>
<span class="t num" style="left:673px;top:1px">1</span>
<span class="t num" style="left:725px;top:1px">0</span>
<span class="a" style="left:399.0px;top:2px;width:3.0px;height:17px;background:#6fa3d8"></span>
</div>
<div class="row" style="left:0;top:300px;background:#383838">
<span class="t" style="left:1px;top:1px">TextureStreamingManager.Update</span>
<span class="t num" style="left:304px;top:1px">1.35</span>
<span class="t num" style="left:462px;top:1px">1.07</span>
<span class="t num" style="left:515px;top:1px"><span class="m">-</span>0.28</span>
<span class="t num" style="left:567px;top:1px">0.28</span>
<span class="t num" style="left:620px;top:1px">1</span>
<span class="t num" style="left:673px;top:1px">1</span>
<span class="t num" style="left:725px;top:1px">0</span>
<span class="a" style="left:399.0px;top:2px;width:3.0px;height:17px;background:#6fa3d8"></span>
</div>
</div>
<svg class="a" style="left:781px;top:357px" width="10" height="8"><path d="M1.3 6.4 L9 6.4 L5.15 1.8 Z" fill="#d0d0d0"/></svg>
<div class="a" style="left:781px;top:369px;width:10px;height:27px;border-radius:5px;background:#606060"></div>
<svg class="a" style="left:781px;top:652px" width="10" height="8"><path d="M1.1 2.2 L9 2.2 L5.05 6.5 Z" fill="#d0d0d0"/></svg>
<div class="panel" style="left:797px;top:48px;width:290px;height:343px"></div>
<svg class="a" style="left:802px;top:56.7px" width="10" height="9"><path d="M0 0 L9.6 0 L4.8 8.5 Z" fill="#6c6c6c"/></svg>
<div class="t b" style="left:814px;top:51px;color:#d0d0d0">Frame Summary</div>
<div class="t num" style="left:907px;top:71px">Left</div>
<div class="t num" style="left:962px;top:71px">Right</div>
<div class="t num" style="left:1017px;top:71px">Diff</div>
<div class="t" style="left:804px;top:91px">Frame Count</div>
<div class="t num" style="left:907px;top:91px">1</div>
<div class="t num" style="left:962px;top:91px">1</div>
<div class="t num" style="left:1017px;top:91px">0</div>
<div class="t" style="left:804px;top:111px">Start</div>
<div class="t num" style="left:907px;top:111px">937</div>
<div class="t num" style="left:962px;top:111px">585</div>
<div class="t" style="left:804px;top:131px">End</div>
<div class="t num" style="left:907px;top:171px">ms</div>
<div class="t num" style="left:962px;top:171px">ms</div>
<div class="t num" style="left:1017px;top:171px">ms</div>
<div class="t" style="left:804px;top:191px">Max</div>
<div class="t num" style="left:907px;top:191px">15.67</div>
<div class="t num" style="left:962px;top:191px">11.42</div>
<div class="t num" style="left:1017px;top:191px"><span class="m">-</span>4.25</div>
<div class="t" style="left:804px;top:211px">Upper Quartile</div>
<div class="t num" style="left:907px;top:211px">15.67</div>
<div class="t num" style="left:962px;top:211px">11.42</div>
<div class="t num" style="left:1017px;top:211px"><span class="m">-</span>4.25</div>
<div class="t" style="left:804px;top:231px">Median</div>
<div class="t num" style="left:907px;top:231px">15.67</div>
<div class="t num" style="left:962px;top:231px">11.42</div>
<div class="t num" style="left:1017px;top:231px"><span class="m">-</span>4.25</div>
<div class="t" style="left:804px;top:251px">Mean</div>
<div class="t num" style="left:907px;top:251px">15.67</div>
<div class="t num" style="left:962px;top:251px">11.42</div>
<div class="t num" style="left:1017px;top:251px"><span class="m">-</span>4.25</div>
<div class="t" style="left:804px;top:271px">Lower Quartile</div>
<div class="t num" style="left:907px;top:271px">15.67</div>
<div class="t num" style="left:962px;top:271px">11.42</div>
<div class="t num" style="left:1017px;top:271px"><span class="m">-</span>4.25</div>
<div class="t" style="left:804px;top:291px">Min</div>
<div class="t num" style="left:907px;top:291px">15.67</div>
<div class="t num" style="left:962px;top:291px">11.42</div>
<div class="t num" style="left:1017px;top:291px"><span class="m">-</span>4.25</div>
<svg class="a" style="left:801px;top:326px" width="153" height="40"><rect x="0.00" y="0" width="6" height="40" fill="#808080"/><rect x="7.74" y="0" width="6" height="40" fill="#808080"/><rect x="15.48" y="0" width="6" height="40" fill="#808080"/><rect x="23.22" y="0" width="6" height="40" fill="#808080"/><rect x="30.96" y="0" width="6" height="40" fill="#808080"/><rect x="38.70" y="0" width="6" height="40" fill="#808080"/><rect x="46.44" y="0" width="6" height="40" fill="#808080"/><rect x="54.18" y="0" width="6" height="40" fill="#808080"/><rect x="61.92" y="0" width="6" height="40" fill="#808080"/><rect x="69.66" y="0" width="6" height="40" fill="#808080"/><rect x="77.40" y="0" width="6" height="40" fill="#808080"/><rect x="85.14" y="0" width="6" height="40" fill="#808080"/><rect x="92.88" y="0" width="6" height="40" fill="#808080"/><rect x="100.62" y="0" width="6" height="40" fill="#808080"/><rect x="108.36" y="0" width="6" height="40" fill="#ec8550"/><rect x="116.10" y="0" width="6" height="40" fill="#808080"/><rect x="123.84" y="0" width="6" height="40" fill="#808080"/><rect x="131.58" y="0" width="6" height="40" fill="#808080"/><rect x="139.32" y="0" width="6" height="40" fill="#808080"/><rect x="147.06" y="0" width="6" height="40" fill="#6fa3d8"/></svg>
<div class="a" style="left:963px;top:326px;width:46px;height:40px;background:#666666"></div>
<div class="a" style="left:968px;top:325px;width:12px;height:2px;background:#c9dcf0"></div>
<div class="a" style="left:992px;top:336px;width:12px;height:2px;background:#f2cdb8"></div>
<div class="t num" style="left:1014px;top:322px">15.675</div>
<div class="t num" style="left:1014px;top:351px">0</div>
<div class="t num" style="left:800.5px;top:368px">0</div>
<div class="t num" style="left:880px;top:368px;width:72px;text-align:right">15.675</div>
<div class="panel" style="left:797px;top:396px;width:290px;height:23px"></div>
<svg class="a" style="left:803px;top:403px" width="9" height="10"><path d="M0 0 L8 4.7 L0 9.4 Z" fill="#6c6c6c"/></svg>
<div class="t b" style="left:814px;top:398px;color:#d0d0d0">Thread Summary</div>
<div class="panel" style="left:797px;top:423px;width:290px;height:244px"></div>
<svg class="a" style="left:802px;top:431.7px" width="10" height="9"><path d="M0 0 L9.6 0 L4.8 8.5 Z" fill="#6c6c6c"/></svg>
<div class="t b" style="left:814px;top:426px;color:#d0d0d0">Marker Summary</div>
<div class="t" style="left:804px;top:446px">PlayerLoop</div>
<div class="t" style="left:804px;top:466px">Mean frame contribution</div>
<div class="t num" style="left:907px;top:486px">Left</div>
<div class="t num" style="left:962px;top:486px">Right</div>
<div class="t num" style="left:1017px;top:486px">Diff</div>
<div class="a" style="left:804px;top:508px;width:100px;height:6.5px;background:#6fa3d8"></div>
<div class="a" style="left:804px;top:514.5px;width:100px;height:6.5px;background:#ec8550"></div>
<div class="t num" style="left:909px;top:506px;font-size:12px">99.79%</div>
<div class="t num" style="left:964px;top:506px;font-size:12px">99.61%</div>
<div class="t num" style="left:1019px;top:506px;font-size:12px"><span class="m">-</span>0.18%</div>
<div class="t" style="left:804px;top:530px">First frame</div>
<div class="a g" style="left:907px;top:531px;width:48px;height:17px;line-height:19px;background:#3f3f3f;border-radius:3px;text-align:center;color:#8c8c8c"><span class="g">937</span></div>
<div class="a g" style="left:960px;top:531px;width:48px;height:17px;line-height:19px;background:#3f3f3f;border-radius:3px;text-align:center;color:#8c8c8c"><span class="g">585</span></div>
<div class="t" style="left:804px;top:551px">Top</div>
<div class="dd" style="left:837px;top:552px;width:38px;height:16px;padding-left:4px"><span class="g">3</span><svg class="a" style="left:25px;top:5px" width="9" height="6"><path d="M0.5 0.5 L8.5 0.5 L4.5 5.5 Z" fill="#d0d0d0"/></svg></div>
<div class="t" style="left:883px;top:551px">by frame costs</div>
<div class="a" style="left:804px;top:573px;width:100px;height:13px;background:#808080"></div>
<div class="a" style="left:804px;top:573px;width:100px;height:6.5px;background:#6fa3d8"></div>
<div class="a" style="left:804px;top:579.5px;width:73px;height:6.5px;background:#ec8550"></div>
<div class="t num" style="left:909px;top:571px">15.64</div>
<div class="t num" style="left:964px;top:571px">11.38</div>
<div class="t num" style="left:1019px;top:571px"><span class="m">-</span>4.26</div>
<svg class="a" style="left:801px;top:648px" width="153" height="19"><rect x="0.00" y="0" width="6" height="19" fill="#ec8550"/><rect x="7.74" y="0" width="6" height="19" fill="#808080"/><rect x="15.48" y="0" width="6" height="19" fill="#808080"/><rect x="23.22" y="0" width="6" height="19" fill="#808080"/><rect x="30.96" y="0" width="6" height="19" fill="#808080"/><rect x="38.70" y="0" width="6" height="19" fill="#808080"/><rect x="46.44" y="0" width="6" height="19" fill="#808080"/><rect x="54.18" y="0" width="6" height="19" fill="#808080"/><rect x="61.92" y="0" width="6" height="19" fill="#808080"/><rect x="69.66" y="0" width="6" height="19" fill="#808080"/><rect x="77.40" y="0" width="6" height="19" fill="#808080"/><rect x="85.14" y="0" width="6" height="19" fill="#808080"/><rect x="92.88" y="0" width="6" height="19" fill="#808080"/><rect x="100.62" y="0" width="6" height="19" fill="#808080"/><rect x="108.36" y="0" width="6" height="19" fill="#808080"/><rect x="116.10" y="0" width="6" height="19" fill="#808080"/><rect x="123.84" y="0" width="6" height="19" fill="#808080"/><rect x="131.58" y="0" width="6" height="19" fill="#808080"/><rect x="139.32" y="0" width="6" height="19" fill="#808080"/><rect x="147.06" y="0" width="6" height="19" fill="#6fa3d8"/></svg>
<div class="a" style="left:963px;top:648px;width:46px;height:19px;background:#666666"></div>
<div class="a" style="left:969px;top:647px;width:11px;height:2px;background:#c9dcf0"></div>
<div class="t num" style="left:1014px;top:644px">15.642</div>
<div class="a" style="left:1071px;top:444px;width:13px;height:220px;background:#303030"></div>
<svg class="a" style="left:1073px;top:448px" width="10" height="8"><path d="M1 6.2 L9.1 6.2 L5.05 1.6 Z" fill="#d0d0d0"/></svg>
<div class="a" style="left:1073px;top:460px;width:10px;height:87.5px;border-radius:5px;background:#606060"></div>
<svg class="a" style="left:1073px;top:652px" width="10" height="8"><path d="M1 2 L9 2 L5 6.3 Z" fill="#d8d8d8"/></svg>
<div class="a" style="left:0;top:0;width:1px;height:669px;background:#858585"></div>
<div class="a" style="left:1091px;top:0;width:1px;height:669px;background:#858585"></div>
<div class="a" style="left:0;top:666px;width:1092px;height:1px;background:#878787;opacity:0.4"></div>
<div class="a" style="left:0;top:667px;width:1092px;height:2px;background:#878787"></div>
</body></html>
